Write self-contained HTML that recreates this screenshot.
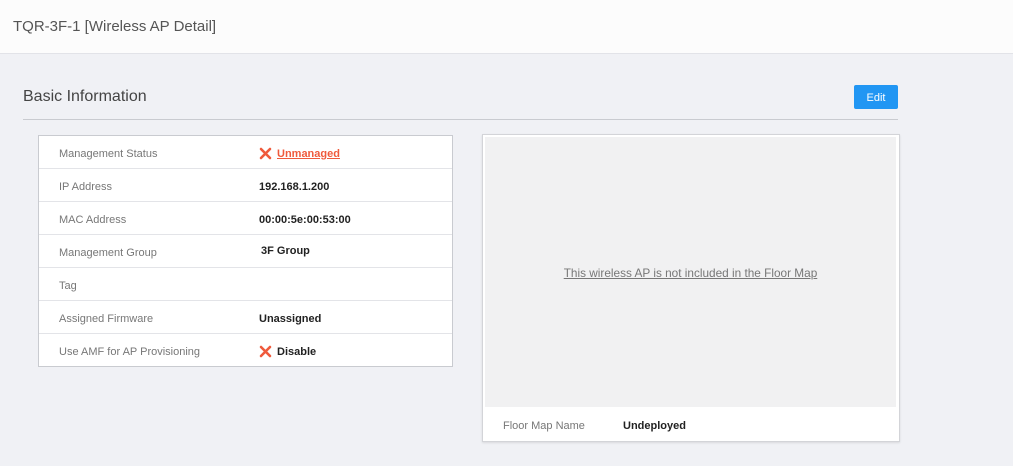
<!DOCTYPE html>
<html><head><style>
*{margin:0;padding:0;box-sizing:border-box}
body{width:1013px;height:466px;background:#f0f1f5;font-family:"Liberation Sans",sans-serif;position:relative;overflow:hidden}
.hdr{position:absolute;left:0;top:0;width:1013px;height:54px;background:#fcfcfc;border-bottom:1px solid #e2e3e8}
.hdr span{position:absolute;left:13px;top:18px;font-size:15px;color:#555}
.bi{position:absolute;left:23px;top:88px;font-size:16px;color:#444}
.line{position:absolute;left:23px;top:119px;width:875px;height:1px;background:#c9cbd0}
.edit{position:absolute;left:854px;top:85px;width:44px;height:24px;background:#2196f3;border-radius:2px;color:#fff;font-size:11px;text-align:center;line-height:26px}
.tbl{position:absolute;left:38px;top:135px;width:415px;height:232px;background:#fff;border:1px solid #c9cbd0}
.row{height:33px;border-bottom:1px solid #e3e4e8;position:relative;font-size:11px}
.row:last-child{border-bottom:none}
.l{position:absolute;left:20px;top:12px;line-height:13px;color:#777}
.v{position:absolute;left:220px;top:12px;line-height:13px;color:#222;font-weight:bold;white-space:nowrap}
.x{display:inline-block;width:13px;height:13px;vertical-align:top;margin-right:5px;margin-top:-1px}
.u{color:#ef5a3c;text-decoration:underline}
.map{position:absolute;left:482px;top:134px;width:418px;height:308px;background:#fff;border:1px solid #d3d4d8;box-shadow:0 1px 2px rgba(0,0,0,.1)}
.grey{position:absolute;left:2px;top:2px;width:411px;height:270px;background:#f1f1f2}
.grey a{position:absolute;left:0;width:100%;top:129px;text-align:center;font-size:11.8px;color:#777;text-decoration:underline}
.fl{position:absolute;left:20px;top:285px;font-size:11px;color:#777}
.fv{position:absolute;left:140px;top:285px;font-size:11px;color:#222;font-weight:bold}
</style></head><body>
<div class="hdr"><span>TQR-3F-1 [Wireless AP Detail]</span></div>
<div class="bi">Basic Information</div>
<div class="edit">Edit</div>
<div class="line"></div>
<div class="tbl">
<div class="row"><span class="l">Management Status</span><span class="v"><svg class="x" viewBox="0 0 13 13"><path d="M2 2L11 11M11 2L2 11" stroke="#ef5a3c" stroke-width="2.6" stroke-linecap="round"/></svg><span class="u">Unmanaged</span></span></div>
<div class="row"><span class="l">IP Address</span><span class="v">192.168.1.200</span></div>
<div class="row"><span class="l">MAC Address</span><span class="v">00:00:5e:00:53:00</span></div>
<div class="row"><span class="l">Management Group</span><span class="v" style="left:222px;top:10px">3F Group</span></div>
<div class="row"><span class="l">Tag</span></div>
<div class="row"><span class="l">Assigned Firmware</span><span class="v">Unassigned</span></div>
<div class="row"><span class="l">Use AMF for AP Provisioning</span><span class="v"><svg class="x" viewBox="0 0 13 13"><path d="M2 2L11 11M11 2L2 11" stroke="#ef5a3c" stroke-width="2.6" stroke-linecap="round"/></svg>Disable</span></div>
</div>
<div class="map">
<div class="grey"><a>This wireless AP is not included in the Floor Map</a></div>
<div class="fl">Floor Map Name</div>
<div class="fv">Undeployed</div>
</div>
</body></html>
